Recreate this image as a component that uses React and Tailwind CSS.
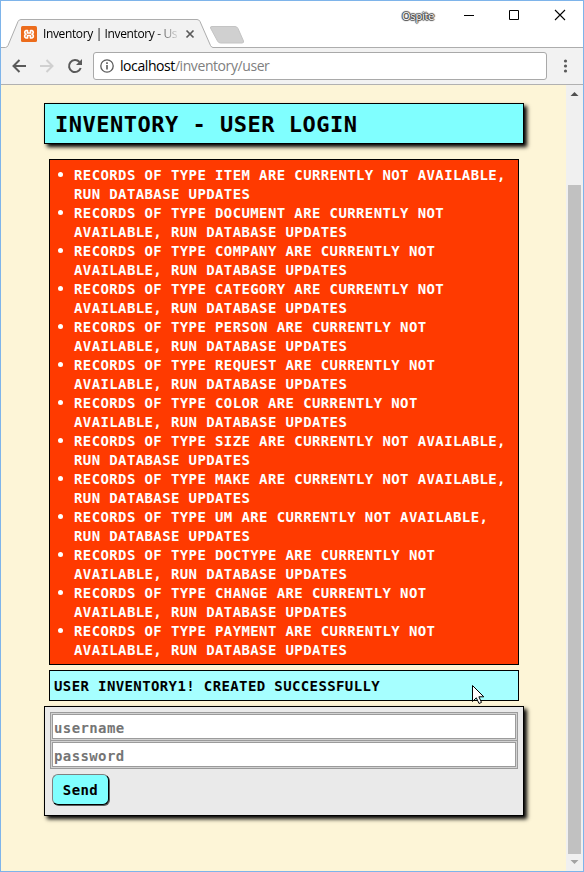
const TYPES = [
  ['ITEM ARE CURRENTLY NOT AVAILABLE,', 'RUN DATABASE UPDATES'],
  ['DOCUMENT ARE CURRENTLY NOT', 'AVAILABLE, RUN DATABASE UPDATES'],
  ['COMPANY ARE CURRENTLY NOT', 'AVAILABLE, RUN DATABASE UPDATES'],
  ['CATEGORY ARE CURRENTLY NOT', 'AVAILABLE, RUN DATABASE UPDATES'],
  ['PERSON ARE CURRENTLY NOT', 'AVAILABLE, RUN DATABASE UPDATES'],
  ['REQUEST ARE CURRENTLY NOT', 'AVAILABLE, RUN DATABASE UPDATES'],
  ['COLOR ARE CURRENTLY NOT', 'AVAILABLE, RUN DATABASE UPDATES'],
  ['SIZE ARE CURRENTLY NOT AVAILABLE,', 'RUN DATABASE UPDATES'],
  ['MAKE ARE CURRENTLY NOT AVAILABLE,', 'RUN DATABASE UPDATES'],
  ['UM ARE CURRENTLY NOT AVAILABLE,', 'RUN DATABASE UPDATES'],
  ['DOCTYPE ARE CURRENTLY NOT', 'AVAILABLE, RUN DATABASE UPDATES'],
  ['CHANGE ARE CURRENTLY NOT', 'AVAILABLE, RUN DATABASE UPDATES'],
  ['PAYMENT ARE CURRENTLY NOT', 'AVAILABLE, RUN DATABASE UPDATES'],
];

function TabStrip() {
  return (
    <div className="relative h-[47px] w-full bg-white">
      <svg className="absolute left-0 top-0" width="582" height="47" viewBox="1 1 582 47">
        <path d="M1 47.5H5.5Q7 47.5 8 45.5L18 21.5Q19 19.5 21 19.5H197Q199 19.5 200 21.5L210.500 45.500Q211.500 47.500 213 47.500H583V49H1Z" fill="#f2f2f2" stroke="#adadad" />
        <path d="M212 26.500H235Q237 26.500 238 28.500L243.500 41Q244 43 242 43H220.500Q218.500 43 217.500 41L210.500 28Q210 26.500 212 26.500Z" fill="#d0d0d0" stroke="#c4c4c4" />
        <rect x="21" y="26" width="16" height="16" rx="1.500" fill="#ec6c1c" />
        <path d="M27.500 30.500H26A2 2 0 0 0 26 34.200A2 2 0 0 0 26 38H27.500V35.500H30.500V38H32A2 2 0 0 0 32 34.200A2 2 0 0 0 32 30.500H30.500V33H27.500Z" fill="none" stroke="#fff" strokeWidth="1.700" strokeLinejoin="round" />
        <path d="M186.500 30.500L193.500 37.500M193.500 30.500L186.500 37.500" stroke="#5a5a5a" strokeWidth="1.700" />
        <path d="M464 15.500H474M509.500 10.500H518.500V19.500H509.500Z" fill="none" stroke="#000" />
        <path d="M555 10L565 20M565 10L555 20" stroke="#000" strokeWidth="1.100" />
      </svg>
      <div className="absolute left-[42px] top-[25px] w-[140px] whitespace-nowrap font-['Open_Sans','Noto_Sans',sans-serif] text-[12px] leading-4 tracking-[-0.37px] text-black [mask-image:linear-gradient(to_right,black_108px,transparent_138px)]">
        Inventory | Inventory - Us
      </div>
      <div className="absolute left-[401px] top-[7px] font-['Open_Sans','Noto_Sans',sans-serif] text-[11px] leading-4 tracking-[-0.2px] text-white [text-shadow:0_0_1px_#222,1px_0_1px_#444,-1px_0_1px_#444,0_1px_1px_#444,0_-1px_1px_#444]">
        Ospite
      </div>
    </div>
  );
}

function Toolbar() {
  return (
    <div className="flex h-[37px] items-center border-b border-[#b1b1b1] bg-[#f2f2f2]">
      <svg width="92" height="36" viewBox="1 48 92 36" fill="none" stroke="#5a5a5a" strokeWidth="2">
        <path d="M26 66H13.500M19.500 60L13.500 66L19.500 72" />
        <path d="M40 66H52.500M46.500 60L52.500 66L46.500 72" stroke="#d0d0d0" />
        <path d="M79.500 62A6 6 0 1 0 80.700 68" />
        <path d="M82 59V65H76Z" fill="#5a5a5a" stroke="none" />
      </svg>
      <div className="flex h-7 w-[454px] items-center rounded-[3px] border border-[#a9a9a9] bg-white pl-1.5">
        <svg width="14" height="14" viewBox="0 0 14 14" fill="none" stroke="#5a5a5a">
          <circle cx="7" cy="7" r="6.200" strokeWidth="1.300" />
          <path d="M7 6V10.500M7 3.300V4.900" strokeWidth="1.600" />
        </svg>
        <span className="ml-1.5 font-['Open_Sans','Noto_Sans',sans-serif] text-[14px] leading-5 tracking-[-0.42px] text-[#808080]"><span className="text-black">localhost</span>/inventory/user</span>
      </div>
      <svg className="ml-[16px]" width="6" height="16" viewBox="0 0 6 16" fill="#5a5a5a">
        <circle cx="2.500" cy="3" r="1.600" />
        <circle cx="2.500" cy="8" r="1.600" />
        <circle cx="2.500" cy="13" r="1.600" />
      </svg>
    </div>
  );
}

function Field({ placeholder, className }) {
  return (
    <div className={`h-[29px] w-full border border-[#9b9b9b] bg-[#d2d2d2] p-px ${className}`}>
      <input
        placeholder={placeholder}
        className="block h-[25px] w-full border border-[#9b9b9b] bg-white px-px pt-0.5 font-bold outline-none placeholder:text-[#757575] placeholder:opacity-100"
      />
    </div>
  );
}

export default function App() {
  return (
    <div className="flex h-[872px] w-[584px] flex-col overflow-hidden border border-[#7eb4ea]">
      <TabStrip />
      <Toolbar />
      <div className="relative flex min-h-0 flex-1 bg-[#fdf5d7]">
        <main className="flex-1 pl-[43px] pt-[18px] font-['DejaVu_Sans_Mono','Liberation_Mono',monospace] text-[14px] font-bold leading-[19px] tracking-[0.385px]">
          <h1 className="h-[41px] w-[480px] border border-black bg-[#80ffff] pl-[10px] text-[22px] leading-[41px] tracking-[0.51px] shadow-[3px_3px_4px_#000]">
            INVENTORY - USER LOGIN
          </h1>
          <ul className="ml-[5px] mt-[15px] h-[506px] w-[470px] border border-black bg-[#ff3a00] pt-1.5 text-white">
            {TYPES.map(([first, second]) => (
              <li key={first} className="flex whitespace-nowrap pl-2">
                <span className="mt-[6px] mr-[11px] size-[5px] rounded-full bg-white" />
                <span>RECORDS OF TYPE {first}<br />{second}</span>
              </li>
            ))}
          </ul>
          <p className="ml-[5px] mt-[5px] h-[31px] w-[470px] border border-black bg-[#a6ffff] pl-1 pt-1.5">
            USER INVENTORY1! CREATED SUCCESSFULLY
          </p>
          <form className="mt-[5px] h-[110px] w-[480px] border border-black bg-[#eaeaea] p-[5px] shadow-[3px_3px_4px_#000]">
            <Field placeholder="username" className="" />
            <Field placeholder="password" className="-mt-px" />
            <button type="button" className="ml-[2px] mt-[5px] flex h-[31px] w-[57px] items-center justify-center rounded-md border border-[#808080] border-b-black border-r-black bg-[#80ffff] pt-0.5 shadow-[1px_1px_0_rgba(0,0,0,0.6)]">
              Send
            </button>
          </form>
        </main>
        <div className="flex w-[17px] flex-col items-center bg-[#f0f0f0]">
          <svg width="17" height="100" viewBox="0 0 17 100"><path d="M4.500 11L8.500 7L12.500 11Z" fill="#505050" /></svg>
          <div className="w-[13px] flex-1 bg-[#c1c1c1]" />
          <svg width="17" height="17" viewBox="0 0 17 17"><path d="M4.500 6L8.500 10L12.500 6Z" fill="#a3a3a3" /></svg>
        </div>
        <svg className="absolute left-[471px] top-[600px]" width="13" height="20" viewBox="0 0 13 20">
          <path d="M0.500 0.500V16.500L4.300 12.800L7 18.500L9.500 17.400L6.900 11.800H11.800Z" fill="#fff" stroke="#000" />
        </svg>
      </div>
    </div>
  );
}
